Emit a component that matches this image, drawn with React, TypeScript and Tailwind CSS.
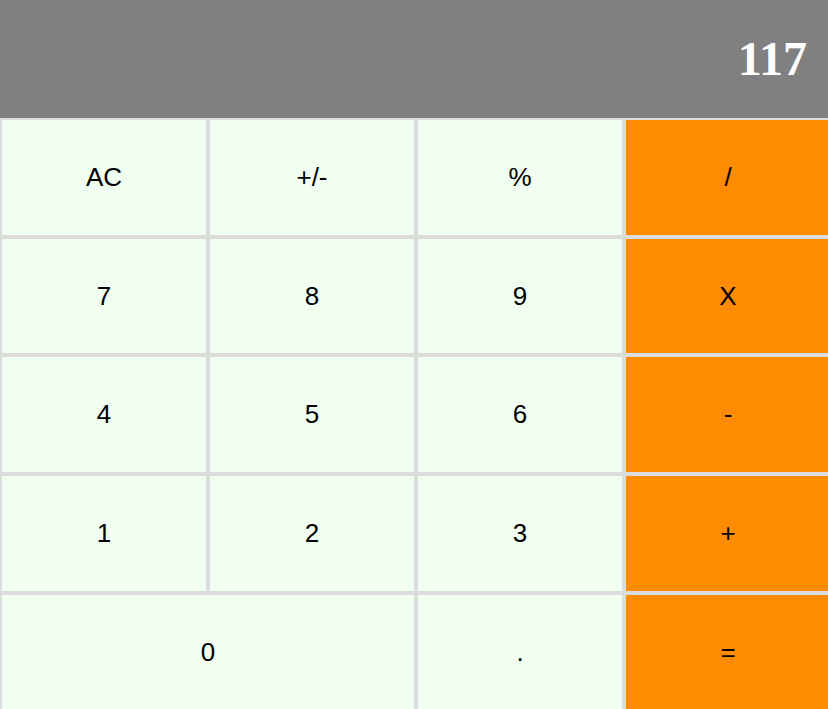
import React from 'react'

const keys: { label: string; op?: boolean; wide?: boolean }[] = [
  { label: 'AC' },
  { label: '+/-' },
  { label: '%' },
  { label: '/', op: true },
  { label: '7' },
  { label: '8' },
  { label: '9' },
  { label: 'X', op: true },
  { label: '4' },
  { label: '5' },
  { label: '6' },
  { label: '-', op: true },
  { label: '1' },
  { label: '2' },
  { label: '3' },
  { label: '+', op: true },
  { label: '0', wide: true },
  { label: '.' },
  { label: '=', op: true },
]

export default function App() {
  return (
    <div className="flex h-screen w-full flex-col overflow-hidden" style={{ fontFamily: '"Liberation Sans", Arial, sans-serif' }}>
      {/* Display */}
      <div className="flex h-[118px] shrink-0 items-center justify-end bg-[#808080] px-[21px]">
        <span
          className="text-[48px] font-bold leading-none text-white"
          style={{ fontFamily: '"Liberation Serif", "Times New Roman", serif' }}
        >
          117
        </span>
      </div>

      {/* Keypad */}
      <div className="grid shrink-0 grid-cols-[repeat(4,208px)] auto-rows-[118.7px]">
        {keys.map((k) => (
          <button
            key={k.label}
            className={`flex items-center justify-center border-2 border-[#dcdcdc] text-[26px] text-black ${
              k.op ? 'bg-[#ff8c00]' : 'bg-[#f0fff0]'
            } ${k.wide ? 'col-span-2' : ''}`}
          >
            {k.label}
          </button>
        ))}
      </div>
    </div>
  )
}
